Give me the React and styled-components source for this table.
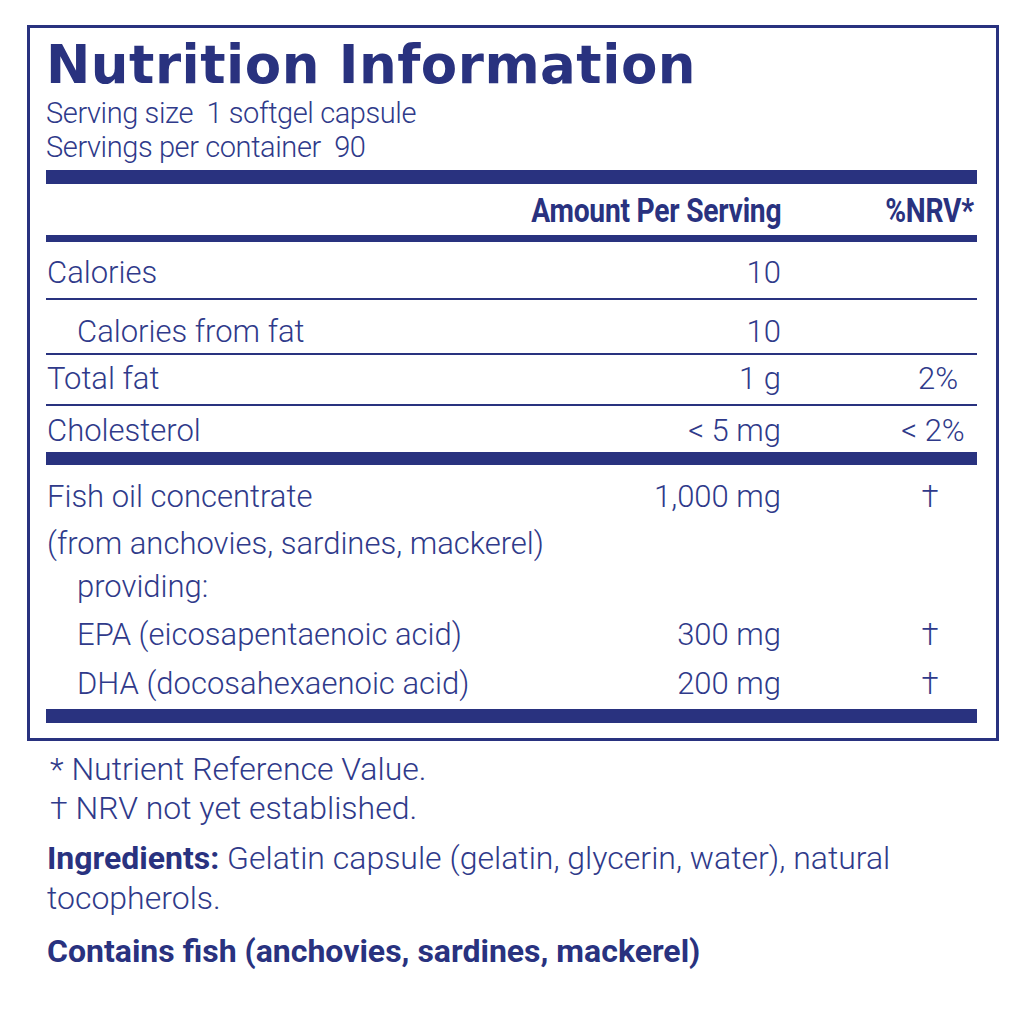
import React from 'react';
import styled, { createGlobalStyle } from 'styled-components';

const NAVY = '#29327f';
const INK = '#2f3a8a';

const GlobalStyle = createGlobalStyle`
  html, body {
    margin: 0;
    padding: 0;
    background: #ffffff;
  }
  body {
    font-family: Roboto, 'Liberation Sans', sans-serif;
    color: ${INK};
  }
`;

const Page = styled.div`
  width: 1024px;
  height: 1024px;
  padding: 25px 0 0 27px;
  box-sizing: border-box;
`;

const Panel = styled.section`
  width: 972px;
  height: 716px;
  box-sizing: border-box;
  border: 3px solid ${NAVY};
  padding: 10px 19px 0 16px;
`;

const Title = styled.h1`
  margin: 0;
  font-family: 'DejaVu Sans', sans-serif;
  font-weight: 700;
  font-size: 53px;
  line-height: 53px;
  letter-spacing: 0.5px;
  color: ${NAVY};
`;

const ServingLine = styled.div`
  font-weight: 300;
  font-size: 29px;
  line-height: 34px;
  letter-spacing: -0.4px;
  margin-top: ${({ $mt }) => $mt || 0}px;
`;

const Bar = styled.div`
  height: ${({ $h }) => $h}px;
  background: ${NAVY};
  margin-top: ${({ $mt }) => $mt || 0}px;
`;

const Rule = styled.div`
  height: 2px;
  background: ${NAVY};
`;

const Row = styled.div`
  display: grid;
  grid-template-columns: minmax(0, 1fr) 240px 94px;
  column-gap: 102px;
  box-sizing: border-box;
  height: ${({ $h }) => ($h ? `${$h}px` : 'auto')};
  padding-top: ${({ $pt }) => $pt || 0}px;
  margin-top: ${({ $mt }) => $mt || 0}px;
  font-size: 31px;
  font-weight: 300;
  line-height: 38px;
`;

const HeadRow = styled(Row)`
  font-weight: 700;
  font-size: 34px;
  letter-spacing: -0.3px;
  color: ${NAVY};
`;

const Label = styled.div`
  padding-left: ${({ $indent }) => ($indent ? 31 : 1)}px;
  white-space: nowrap;
  grid-column: ${({ $wide }) => ($wide ? '1 / -1' : 'auto')};
`;

const Amount = styled.div`
  display: flex;
  justify-content: flex-end;
  white-space: nowrap;
`;

const Nrv = styled.div`
  display: flex;
  justify-content: center;
  white-space: nowrap;
  padding-left: ${({ $shift }) => $shift || 0}px;
`;

const HeadCell = styled.div`
  display: flex;
  justify-content: flex-end;
  white-space: nowrap;
  margin-right: ${({ $mr }) => $mr || 0}px;
`;

const Condensed = styled.span`
  display: inline-block;
  transform: scaleX(0.83);
  transform-origin: right center;
`;

const Notes = styled.div`
  padding: 9px 0 0 20px;
  font-size: 32px;
  font-weight: 300;
  line-height: 39px;
`;

const Note = styled.p`
  margin: 0;
  padding-left: ${({ $pl }) => $pl || 0}px;
  line-height: ${({ $lh }) => $lh || 39}px;
  margin-top: ${({ $mt }) => $mt || 0}px;
`;

const Strong = styled.span`
  font-weight: 700;
  color: ${NAVY};
`;

const upper = [
  { label: 'Calories', amount: '10', nrv: '', h: 56, pt: 12 },
  { label: 'Calories from fat', amount: '10', nrv: '', h: 53, pt: 13, indent: true },
  { label: 'Total fat', amount: '1 g', nrv: '2%', h: 49, pt: 5, shift: 16 },
  { label: 'Cholesterol', amount: '< 5 mg', nrv: '< 2%', h: 46, pt: 6, shift: 6 }
];

const lower = [
  { label: 'Fish oil concentrate', amount: '1,000 mg', nrv: '†', mt: 13 },
  { label: '(from anchovies, sardines, mackerel)', wide: true, mt: 9 },
  { label: 'providing:', indent: true, wide: true, mt: 5 },
  { label: 'EPA (eicosapentaenoic acid)', amount: '300 mg', nrv: '†', indent: true, mt: 10 },
  { label: 'DHA (docosahexaenoic acid)', amount: '200 mg', nrv: '†', indent: true, mt: 11 }
];

export default function App() {
  return (
    <Page>
      <GlobalStyle />
      <Panel>
        <Title>Nutrition Information</Title>
        <ServingLine $mt={5}>Serving size&nbsp; 1 softgel capsule</ServingLine>
        <ServingLine>Servings per container&nbsp; 90</ServingLine>
        <Bar $h={14} $mt={6} />
        <HeadRow $h={51} $pt={7}>
          <Label />
          <HeadCell>
            <Condensed>Amount Per Serving</Condensed>
          </HeadCell>
          <HeadCell $mr={3}>
            <Condensed>%NRV*</Condensed>
          </HeadCell>
        </HeadRow>
        <Bar $h={7} />
        {upper.map((item, i) => (
          <React.Fragment key={item.label}>
            {i > 0 && <Rule />}
            <Row $h={item.h} $pt={item.pt}>
              <Label $indent={item.indent}>{item.label}</Label>
              <Amount>{item.amount}</Amount>
              <Nrv $shift={item.shift}>{item.nrv}</Nrv>
            </Row>
          </React.Fragment>
        ))}
        <Bar $h={13} />
        {lower.map(item => (
          <Row key={item.label} $mt={item.mt}>
            <Label $indent={item.indent} $wide={item.wide}>
              {item.label}
            </Label>
            {!item.wide && <Amount>{item.amount}</Amount>}
            {!item.wide && <Nrv>{item.nrv}</Nrv>}
          </Row>
        ))}
        <Bar $h={14} $mt={6} />
      </Panel>
      <Notes>
        <Note $pl={3}>* Nutrient Reference Value.</Note>
        <Note $pl={3}>† NRV not yet established.</Note>
        <Note $mt={10} $lh={40}>
          <Strong>Ingredients:</Strong> Gelatin capsule (gelatin, glycerin, water), natural
          <br />
          tocopherols.
        </Note>
        <Note $mt={14}>
          <Strong>Contains fish (anchovies, sardines, mackerel)</Strong>
        </Note>
      </Notes>
    </Page>
  );
}
